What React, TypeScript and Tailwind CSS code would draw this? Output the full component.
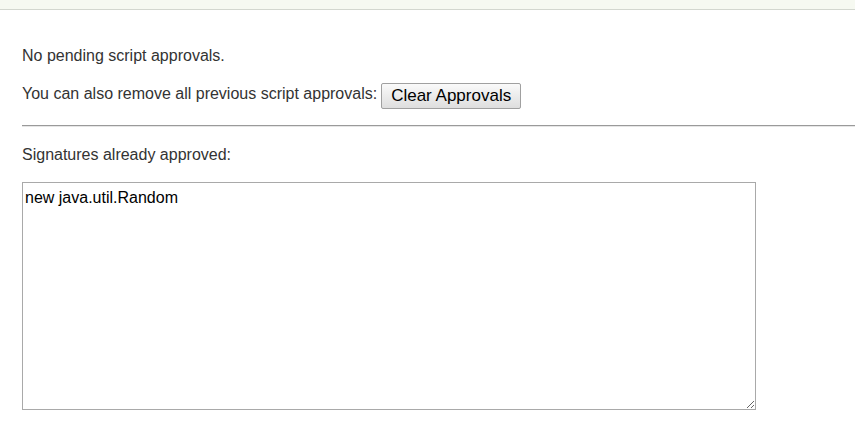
export default function App() {
  return (
    <div className="min-h-screen bg-white font-['Liberation_Sans',Arial,sans-serif] text-[16px] text-[#333]">
      {/* top strip */}
      <div className="h-[10px] border-b border-[#d3d7cf] bg-[#f6f9f1]" />

      <div className="pl-[22px] pt-[37px]">
        <p className="leading-[18px]">No pending script approvals.</p>

        <div className="mt-[18px] flex h-[26px] items-start">
          <span className="mt-[2px] leading-[18px]">You can also remove all previous script approvals:</span>
          <button
            type="button"
            className="ml-[4px] flex h-[26px] items-center rounded-[2px] border border-[#a0a0a0] bg-gradient-to-b from-[#fafafa] to-[#dedede] px-[9px] text-[17px] leading-[20px] text-black"
          >
            Clear Approvals
          </button>
        </div>

        <hr className="mt-[16px] border-0 border-t border-b border-t-[#9a9a9a] border-b-[#e6e6e6]" />

        <p className="mt-[19px] leading-[18px]">Signatures already approved:</p>

        <textarea
          readOnly
          className="mt-[18px] block h-[228px] w-[734px] border border-[#a9a9a9] px-[2px] pt-[6px] font-['Liberation_Sans',Arial,sans-serif] text-[16px] leading-[18px] text-black outline-none"
          defaultValue="new java.util.Random"
        />
      </div>
    </div>
  );
}
